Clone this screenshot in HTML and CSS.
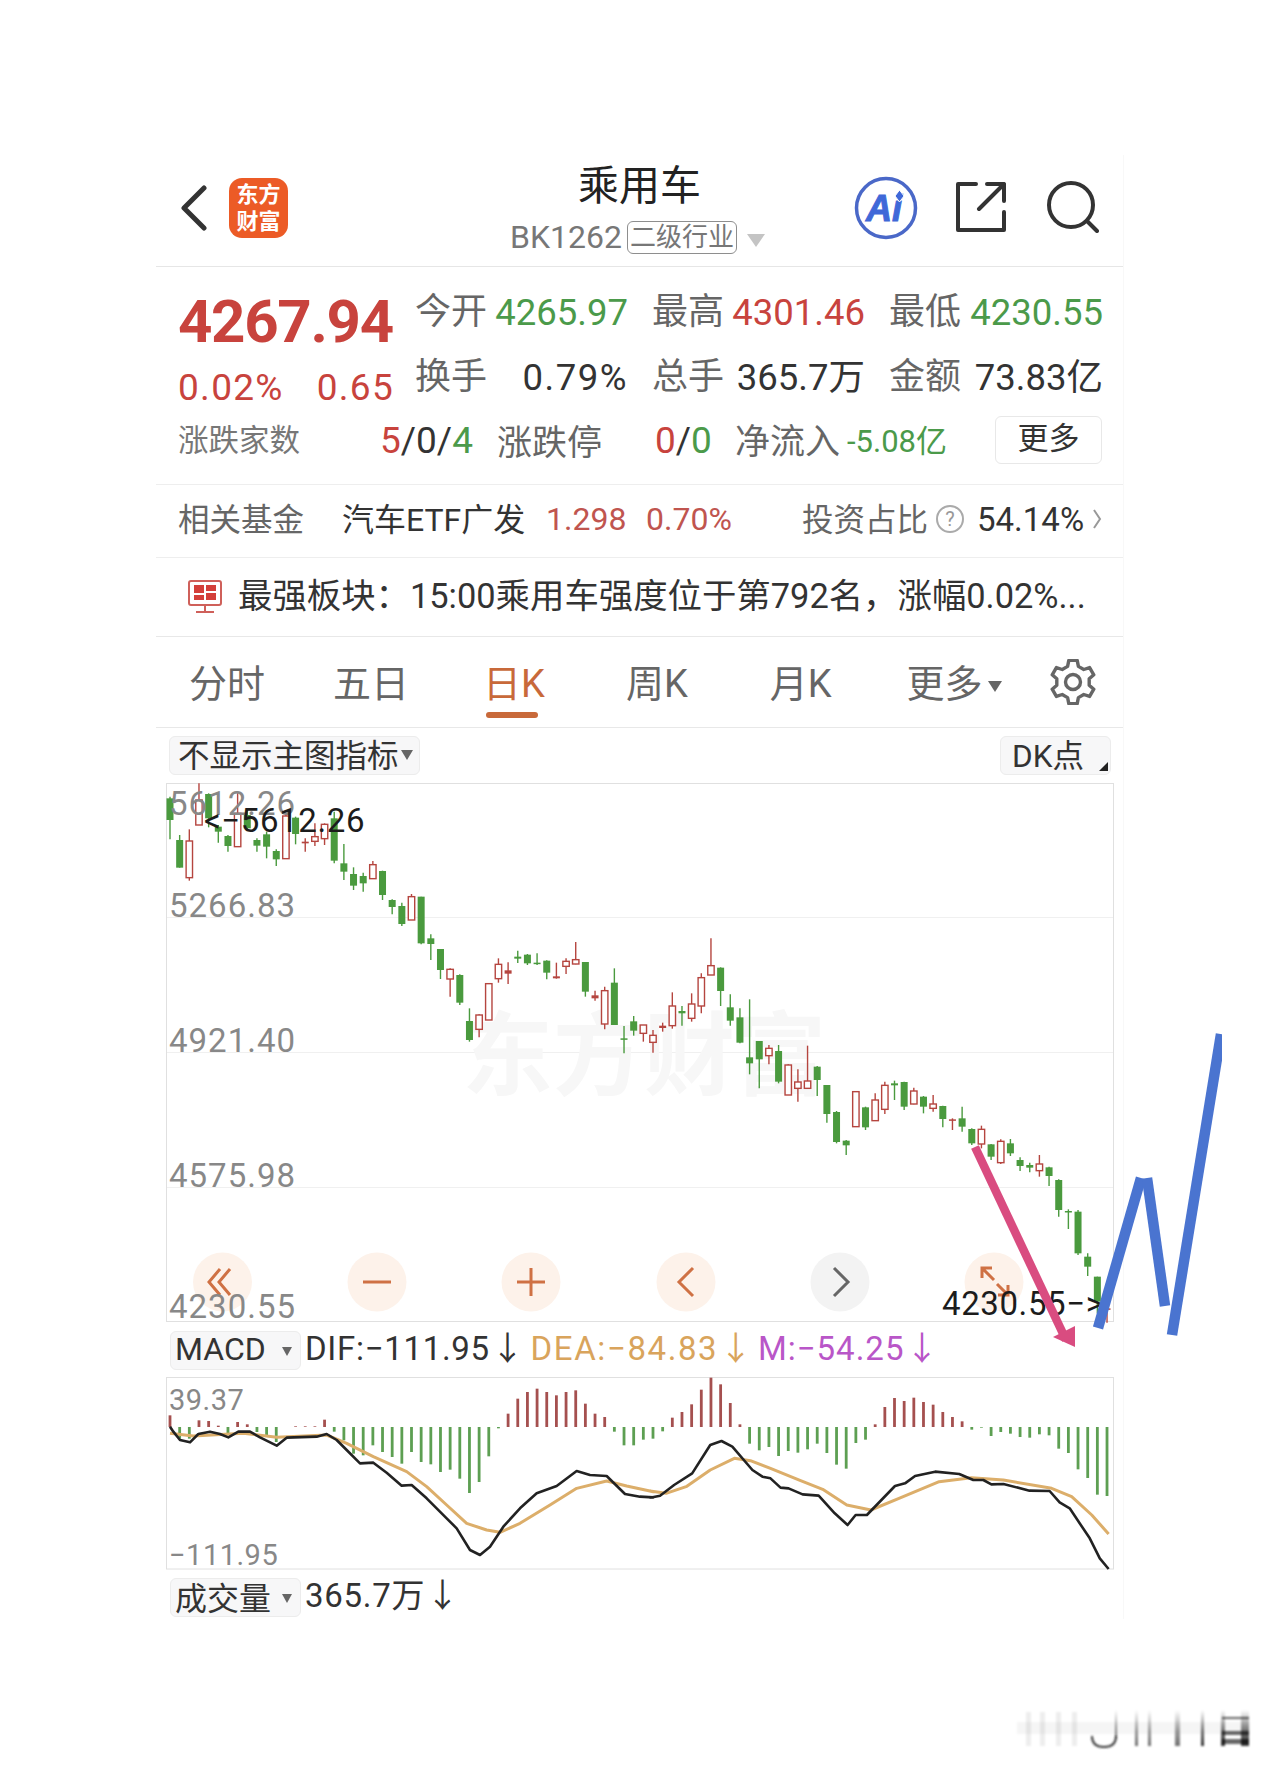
FILE: index.html
```html
<!DOCTYPE html>
<html lang="zh-CN">
<head>
  <meta charset="UTF-8">
  <title>乘用车 BK1262</title>
  <link rel="stylesheet" href="styles.css">
</head>
<body>

  <div class="panel">

    <div class="header">
      <div class="header-left">
        <svg class="back-icon" viewBox="0 0 27 46"><path d="M24 3 L4 23 L24 43"/></svg>
        <div class="logo">东方<br>财富</div>
      </div>
      <div class="header-title">
        <div class="title">乘用车</div>
        <div class="subtitle">
          <span>BK1262</span>
          <span class="badge">二级行业</span>
          <span class="badge-arrow"></span>
        </div>
      </div>
      <div class="header-right">
        <svg class="ai-icon" viewBox="0 0 64 64">
          <circle cx="32" cy="32" r="29.5"/>
          <text x="12" y="45">Ai</text>
          <path class="spark" d="M45.5 14 L50 20 L45.5 26 L41 20 Z"/>
        </svg>
        <svg class="line-icon share-icon" viewBox="0 0 50 50"><path d="M20 2 H2 V48 H48 V30 M31 2 H48 V19 M48 2 L23 27"/></svg>
        <svg class="line-icon search-icon" viewBox="0 0 52 52"><circle cx="24" cy="24" r="22"/><path d="M40 40 L50 50"/></svg>
      </div>
    </div>

    <div class="quote">
      <div class="quote-top">
        <div class="price-block">
          <div class="price up">4267.94</div>
          <div class="change up"><span>0.02%</span><span>0.65</span></div>
        </div>
        <div class="stats">
          <div class="stat"><span class="stat-label">今开</span><span class="down">4265.97</span></div>
          <div class="stat"><span class="stat-label">最高</span><span class="up">4301.46</span></div>
          <div class="stat"><span class="stat-label">最低</span><span class="down">4230.55</span></div>
          <div class="stat"><span class="stat-label">换手</span><span class="wide">0.79%</span></div>
          <div class="stat"><span class="stat-label">总手</span><span>365.7万</span></div>
          <div class="stat"><span class="stat-label">金额</span><span>73.83亿</span></div>
        </div>
      </div>
      <div class="market-row">
        <span class="breadth-label">涨跌家数</span>
        <span class="breadth"><span class="up">5</span>/0/<span class="down">4</span></span>
        <span class="limit-label">涨跌停</span>
        <span class="limit"><span class="up">0</span>/<span class="down">0</span></span>
        <span class="flow-label">净流入</span>
        <span class="flow down">-5.08亿</span>
        <span class="more-button">更多</span>
      </div>
    </div>

    <div class="fund-row">
      <span class="fund-label">相关基金</span>
      <span class="fund-name">汽车ETF广发</span>
      <span class="fund-price up-soft">1.298</span>
      <span class="fund-pct up-soft">0.70%</span>
      <span class="fund-share-label">投资占比</span>
      <span class="help-dot">?</span>
      <span class="fund-share">54.14%</span>
      <svg class="chevron" viewBox="0 0 10 24"><path d="M2 3 L8 12 L2 21"/></svg>
    </div>

    <div class="news-row">
      <svg class="monitor-icon" viewBox="0 0 34 34">
        <rect class="monitor-frame" x="1" y="1" width="32" height="24" rx="2"/>
        <path class="monitor-stand" d="M17 25 V32 M8 32 H26"/>
        <rect class="monitor-cell" x="6" y="5" width="10" height="8"/>
        <rect class="monitor-cell" x="18" y="5" width="10" height="6"/>
        <rect class="monitor-cell" x="6" y="15" width="10" height="5"/>
        <rect class="monitor-cell" x="18" y="13" width="10" height="7"/>
      </svg>
      <span class="news-text">最强板块：15:00乘用车强度位于第792名，涨幅0.02%...</span>
    </div>

    <div class="tabs">
      <span class="tab">分时</span>
      <span class="tab">五日</span>
      <span class="tab active">日K</span>
      <span class="tab">周K</span>
      <span class="tab">月K</span>
      <span class="tab">更多<i class="caret tab-caret"></i></span>
      <svg class="gear-icon" viewBox="0 0 46 46">
        <path d="M18.8 1.4 L27.2 1.4 L28.4 7.4 L33.8 10.5 L39.6 8.6 L43.8 15.8 L39.2 19.8 L39.2 26.2 L43.8 30.2 L39.6 37.4 L33.8 35.5 L28.4 38.6 L27.2 44.6 L18.8 44.6 L17.6 38.6 L12.2 35.5 L6.4 37.4 L2.2 30.2 L6.8 26.2 L6.8 19.8 L2.2 15.8 L6.4 8.6 L12.2 10.5 L17.6 7.4 Z"/>
        <circle cx="23" cy="23" r="7.5"/>
      </svg>
    </div>

    <div class="indicator-row">
      <span class="select-box main-select"><span class="select-text">不显示主图指标</span><i class="caret"></i></span>
      <span class="select-box dk-box"><span class="select-text">DK点</span><i class="corner"></i></span>
    </div>

    <svg class="kline" viewBox="166 783 948 539">
      <rect class="frame" x="166.5" y="783.5" width="947" height="538"/>
      <path class="grid-line" d="M167 917.5 H1113 M167 1052.5 H1113 M167 1187.5 H1113"/>
      <text class="watermark" x="462" y="1088">东方财富</text>
      <g id="candles"></g>
      <text class="axis-label" x="169" y="815">5612.26</text>
      <text class="axis-label" x="169" y="917">5266.83</text>
      <text class="axis-label" x="169" y="1052">4921.40</text>
      <text class="axis-label" x="169" y="1187">4575.98</text>

      <circle class="round-btn" cx="222.5" cy="1282" r="29.5"/>
      <circle class="round-btn" cx="377" cy="1282" r="29.5"/>
      <circle class="round-btn" cx="531" cy="1282" r="29.5"/>
      <circle class="round-btn" cx="686" cy="1282" r="29.5"/>
      <circle class="round-btn grey" cx="840" cy="1282" r="29.5"/>
      <circle class="round-btn" cx="994" cy="1282" r="29.5"/>
      <path class="btn-stroke" d="M220 1269 L209 1282 L220 1295 M230 1269 L219 1282 L230 1295"/>
      <path class="btn-stroke" d="M363 1282 H391"/>
      <path class="btn-stroke" d="M517 1282 H545 M531 1268 V1296"/>
      <path class="btn-stroke" d="M693 1268 L679 1282 L693 1296"/>
      <path class="btn-stroke dark" d="M834 1268 L848 1282 L834 1296"/>
      <path class="btn-stroke" d="M982 1278 V1268 H992 M982 1268 L994 1280 M997 1284 L1008 1295 M998 1295 H1008 V1285"/>

      <text class="axis-label" x="169" y="1318">4230.55</text>
      <text class="mark-label" x="204" y="832">&lt;−5612.26</text>
      <text class="mark-label" x="942" y="1315">4230.55−&gt;</text>
    </svg>

    <div class="indicator-head macd-head">
      <span class="select-box small-select">MACD<i class="caret"></i></span>
      <span class="reading">DIF:−111.95<i class="arrow">↓</i></span>
      <span class="reading dea">DEA:−84.83<i class="arrow">↓</i></span>
      <span class="reading macd">M:−54.25<i class="arrow">↓</i></span>
    </div>

    <svg class="macd-chart" viewBox="166 1377 948 193">
      <rect class="frame" x="166.5" y="1377.5" width="947" height="191.5"/>
      <g id="macdBars"></g>
      <polyline id="deaLine" class="dea-line"/>
      <polyline id="difLine" class="dif-line"/>
      <text class="macd-label" x="169" y="1410">39.37</text>
      <text class="macd-label" x="169" y="1565">−111.95</text>
    </svg>

    <div class="indicator-head volume-head">
      <span class="select-box small-select">成交量<i class="caret"></i></span>
      <span class="reading">365.7万<i class="arrow">↓</i></span>
    </div>
  </div>

  <!-- pen marks and the site stamp lie over the screenshot -->
  <svg class="overlay" viewBox="0 0 1280 1774">
    <defs>
      <filter id="soft"><feGaussianBlur stdDeviation="1.2"/></filter>
      <linearGradient id="fade" x1="0" y1="0" x2="0" y2="1">
        <stop offset="0" stop-color="#000" stop-opacity="0"/>
        <stop offset="0.6" stop-color="#000" stop-opacity="0.55"/>
        <stop offset="1" stop-color="#000" stop-opacity="0.8"/>
      </linearGradient>
      <clipPath id="penClip"><rect x="0" y="0" width="1222" height="1774"/></clipPath>
    </defs>
    <path class="pen-pink" d="M975 1147 L1066 1340"/>
    <path class="pen-pink-head" d="M1053 1337 L1075 1326 L1075 1347 Z"/>
    <g clip-path="url(#penClip)">
      <path class="pen-blue" d="M1098 1328 L1141 1178"/>
      <path class="pen-blue" d="M1147 1178 L1165 1306"/>
      <path class="pen-blue" d="M1172 1335 L1221 1034"/>
    </g>
    <g class="stamp" filter="url(#soft)">
      <rect class="stamp-band" x="1017" y="1722" width="233" height="12"/>
      <rect class="stamp-faint" x="1026" y="1712" width="5" height="34"/>
      <rect class="stamp-faint" x="1040" y="1712" width="5" height="34"/>
      <rect class="stamp-faint" x="1056" y="1712" width="5" height="34"/>
      <rect class="stamp-faint" x="1072" y="1712" width="5" height="34"/>
      <path class="stamp-u" d="M1092 1736 Q1092 1747 1104 1747 Q1116 1747 1116 1736"/>
      <rect class="stamp-mid" x="1115" y="1710" width="2" height="28"/>
      <rect class="stamp-mid" x="1135" y="1710" width="3" height="36"/>
      <rect class="stamp-mid" x="1148" y="1710" width="3" height="36"/>
      <rect class="stamp-mid" x="1175" y="1710" width="5" height="36"/>
      <rect class="stamp-dark" x="1201" y="1710" width="3" height="36"/>
      <rect class="stamp-dark" x="1221" y="1710" width="4" height="36"/>
      <rect class="stamp-dark" x="1241" y="1710" width="8" height="36"/>
      <rect class="stamp-line" x="1222" y="1717" width="27" height="2"/>
      <rect class="stamp-line" x="1222" y="1731" width="27" height="4"/>
      <rect class="stamp-line" x="1222" y="1739" width="27" height="5"/>
    </g>
  </svg>

  <script src="chart.js"></script>

</body>
</html>
```

FILE: styles.css
```css
* {
  box-sizing: border-box;
}

html, body {
  margin: 0;
  background-color: white;
}

body {
  position: relative;
  height: 1774px;
  overflow: hidden;
  padding: 155px 0 0 156px;
  font-family: Roboto, "Noto Sans CJK SC", sans-serif;
  color: #333;
}

.panel {
  width: 968px;
  border-right: 1px solid #f8f8f8;
}

.up { color: #c8433d; }
.down { color: #4b9a4a; }
.up-soft { color: #c0554f; }

/* header */
.header {
  height: 112px;
  display: grid;
  grid-template-columns: 1fr auto 1fr;
  border-bottom: 1px solid #e6e6e6;
}

.header-left {
  display: flex;
  align-items: flex-start;
  padding: 29px 0 0 24px;
  gap: 22px;
}

.back-icon {
  width: 27px;
  height: 46px;
  margin-top: 1px;
  fill: none;
  stroke: #333;
  stroke-width: 5;
  stroke-linecap: round;
  stroke-linejoin: round;
}

.logo {
  width: 59px;
  height: 60px;
  margin-top: -6px;
  padding-top: 3px;
  background-color: #ec5b26;
  border-radius: 13px;
  color: white;
  font-size: 22px;
  font-weight: 700;
  line-height: 27px;
  text-align: center;
}

.header-title {
  text-align: center;
  padding-top: 8px;
}

.title {
  font-size: 41px;
  line-height: 46px;
  color: #222;
}

.subtitle {
  display: flex;
  align-items: center;
  margin: 11px 0 0 -4px;
  color: #777;
  font-size: 32px;
  line-height: 34px;
}

.badge {
  margin-left: 5px;
  padding: 0 2px;
  border: 1px solid #8e8e8e;
  border-radius: 6px;
  font-size: 26px;
  line-height: 31px;
  letter-spacing: 0;
}

.badge-arrow {
  margin-left: 10px;
  margin-top: 6px;
  border-top: 13px solid #c4c4c4;
  border-left: 9px solid transparent;
  border-right: 9px solid transparent;
}

.header-right {
  display: flex;
  justify-content: flex-end;
  align-items: flex-start;
  padding: 21px 24px 0 0;
}

.ai-icon {
  width: 64px;
  height: 64px;
  margin: 0 38px 0 0;
}

.ai-icon circle {
  fill: none;
  stroke: #4a68c8;
  stroke-width: 3.5;
}

.ai-icon text {
  font-family: "Liberation Sans", sans-serif;
  font-size: 36px;
  font-weight: 700;
  font-style: italic;
  fill: #3f68d8;
  stroke: #3f68d8;
  stroke-width: 1;
}

.ai-icon .spark {
  fill: #3f68d8;
  stroke: white;
  stroke-width: 1;
}

.line-icon {
  fill: none;
  stroke: #333;
  stroke-width: 4;
  stroke-linecap: round;
  stroke-linejoin: round;
}

.share-icon {
  width: 50px;
  height: 50px;
  margin: 6px 41px 0 0;
}

.search-icon {
  width: 52px;
  height: 52px;
  margin-top: 5px;
}

/* quote */
.quote {
  height: 218px;
  padding: 13px 20px 0 22px;
  border-bottom: 1px solid #eee;
}

.quote-top {
  display: flex;
  height: 129px;
}

.price-block {
  width: 237px;
}

.price {
  margin-top: 12px;
  font-size: 60px;
  font-weight: 700;
  line-height: 60px;
  letter-spacing: -1.3px;
}

.change {
  display: flex;
  justify-content: space-between;
  width: 216px;
  margin-top: 16px;
  font-size: 37px;
  line-height: 40px;
  letter-spacing: 1.3px;
}

.stats {
  display: grid;
  grid-template-columns: 213px 213px 214px;
  grid-auto-rows: 65px;
  column-gap: 24px;
  font-size: 36.5px;
  line-height: 65px;
}

.stat {
  display: flex;
  justify-content: space-between;
}

.stat-label {
  color: #666;
  font-size: 36px;
}

.wide {
  letter-spacing: 1.5px;
}

.market-row {
  display: flex;
  align-items: center;
  height: 58px;
  margin-top: 2px;
  font-size: 35px;
  color: #666;
}

.breadth-label { width: 202px; margin-bottom: 4px; font-size: 30.5px; color: #777; }
.breadth { width: 117px; font-size: 37px; color: #333; }
.limit-label { width: 158px; margin-bottom: 2px; }
.limit { width: 80px; font-size: 37px; color: #333; }
.flow-label { width: 112px; margin-bottom: 3px; }
.flow { width: 148px; margin-bottom: 3px; font-size: 31px; }

.more-button {
  width: 107px;
  height: 48px;
  border: 1px solid #e8e8e8;
  border-radius: 6px;
  color: #333;
  font-size: 31px;
  line-height: 44px;
  text-align: center;
}

/* fund + news rows */
.fund-row {
  display: flex;
  align-items: center;
  height: 73px;
  padding: 0 0 4px 22px;
  font-size: 32px;
  border-bottom: 1px solid #eee;
}

.fund-label { width: 164px; margin-bottom: 5px; color: #666; font-size: 31.5px; }
.fund-name { width: 204px; margin-bottom: 5px; }
.fund-price { width: 100px; }
.fund-pct { width: 156px; }
.fund-share-label { width: 134px; margin-bottom: 5px; color: #666; font-size: 31.5px; }

.help-dot {
  width: 28px;
  height: 28px;
  margin-right: 13px;
  border: 2px solid #aaa;
  border-radius: 50%;
  color: #999;
  font-size: 20px;
  line-height: 24px;
  text-align: center;
}

.fund-share {
  font-size: 33px;
}

.chevron {
  width: 10px;
  height: 24px;
  margin-left: 8px;
  fill: none;
  stroke: #999;
  stroke-width: 2;
}

.news-row {
  display: flex;
  align-items: center;
  height: 79px;
  padding-left: 32px;
  gap: 16px;
  font-size: 34.4px;
  border-bottom: 1px solid #e8e8e8;
  white-space: nowrap;
}

.news-text {
  margin-bottom: 8px;
}

.monitor-icon {
  width: 34px;
  height: 34px;
  flex: none;
}

.monitor-frame, .monitor-stand {
  fill: none;
  stroke: #cf605a;
  stroke-width: 2;
}

.monitor-cell {
  fill: #d33f3a;
}

/* period tabs */
.tabs {
  display: flex;
  align-items: center;
  height: 91px;
  padding-left: 33px;
  font-size: 38px;
  color: #666;
  border-bottom: 1px solid #e8e8e8;
}

.tab {
  position: relative;
  margin-right: 81px;
  margin-bottom: 4px;
  white-space: nowrap;
}

.tab:nth-child(1) { margin-right: 68px; }
.tab:nth-child(2) { margin-right: 74px; }
.tab:nth-child(4) { margin-right: 82px; }
.tab:nth-child(5) { margin-right: 75px; }
.tab:nth-child(6) { margin-right: 48px; }

.tab.active {
  color: #c8693a;
}

.tab.active::after {
  content: "";
  position: absolute;
  left: 3px;
  top: 59px;
  width: 52px;
  height: 6px;
  border-radius: 3px;
  background-color: #c8693a;
}

.caret {
  display: inline-block;
  margin-left: 5px;
  vertical-align: middle;
  border-top: 9px solid #666;
  border-left: 5px solid transparent;
  border-right: 5px solid transparent;
}

.tab-caret {
  border-top-width: 11px;
  border-left-width: 7px;
  border-right-width: 7px;
}

.gear-icon {
  width: 46px;
  height: 46px;
  fill: none;
  stroke: #666;
  stroke-width: 3.4;
  stroke-linejoin: round;
}

/* selector rows */
.select-box {
  display: inline-flex;
  align-items: center;
  position: relative;
  height: 39px;
  background-color: #f7f7f8;
  border: 1px solid #ececec;
  border-radius: 6px;
  color: #333;
  font-size: 31.5px;
  white-space: nowrap;
}

.select-text {
  margin-bottom: 6px;
}

.indicator-row {
  display: flex;
  justify-content: space-between;
  height: 55px;
  padding: 8px 12px 0 13px;
}

.main-select {
  width: 251px;
  padding-left: 8px;
}

.main-select .caret {
  margin-left: 2px;
  margin-top: -2px;
  border-top-width: 10px;
  border-left-width: 6px;
  border-right-width: 6px;
}

.dk-box {
  width: 111px;
  padding-left: 11px;
}

.corner {
  position: absolute;
  right: 2px;
  bottom: 3px;
  border-bottom: 9px solid #222;
  border-left: 9px solid transparent;
}

.kline, .macd-chart {
  display: block;
  margin-left: 10px;
  width: 948px;
  overflow: visible;
}

.kline { height: 539px; }
.macd-chart { height: 193px; }

.frame {
  fill: none;
  stroke: #e0e0e0;
  stroke-width: 1;
}

.grid-line {
  stroke: #f0f0f0;
  stroke-width: 1;
}

.watermark {
  font-size: 91px;
  font-weight: 700;
  fill: #f7f7f7;
}

.axis-label {
  font-size: 33px;
  letter-spacing: 1px;
  fill: #888;
}

.mark-label {
  font-size: 33px;
  letter-spacing: 0.6px;
  fill: #1c1c1c;
}

.round-btn { fill: #fdf2ea; }
.round-btn.grey { fill: #f3f3f3; }

.btn-stroke {
  fill: none;
  stroke: #cf7144;
  stroke-width: 3;
}

.btn-stroke.dark { stroke: #666; }

.indicator-head {
  display: flex;
  align-items: flex-start;
  padding-left: 14px;
  font-size: 33px;
}

.macd-head { height: 55px; padding-top: 9px; }
.volume-head { height: 49px; padding-top: 8px; }

.small-select {
  width: 131px;
  padding: 0 0 3px 4px;
  margin-right: 4px;
  font-size: 32px;
}

.small-select .caret {
  position: absolute;
  right: 8px;
  top: 15px;
}

.reading {
  height: 40px;
  margin-top: 1px;
  line-height: 34px;
  letter-spacing: 0.7px;
  white-space: nowrap;
}

.arrow {
  font-style: normal;
  margin-left: 1px;
}

.dea {
  margin-left: 6px;
  color: #d9a45c;
  letter-spacing: 1.6px;
}

.macd {
  margin-left: 4px;
  color: #b956c8;
  letter-spacing: 1px;
}

.macd-label {
  font-size: 29px;
  letter-spacing: 0.5px;
  fill: #888;
}

.dif-line, .dea-line {
  fill: none;
  stroke-width: 2.6;
  stroke-linejoin: round;
}

.dif-line { stroke: #222; }
.dea-line { stroke: #dcae6a; stroke-width: 3; }

/* hand drawn marks */
.overlay {
  position: absolute;
  left: 0;
  top: 0;
  width: 1280px;
  height: 1774px;
  pointer-events: none;
}

.pen-pink {
  fill: none;
  stroke: #d94c80;
  stroke-width: 8.5;
}

.pen-pink-head { fill: #d94c80; }

.pen-blue {
  fill: none;
  stroke: #4a74d0;
  stroke-width: 10.5;
}

.stamp-band { fill: #000; opacity: 0.04; }
.stamp-faint { fill: #000; opacity: 0.07; }
.stamp-mid { fill: url(#fade); opacity: 0.7; }
.stamp-dark { fill: url(#fade); }
.stamp-line { fill: #000; opacity: 0.6; }

.stamp-u {
  fill: none;
  stroke: #333;
  stroke-width: 2;
}
```

FILE: chart.js
```js
const NS = "http://www.w3.org/2000/svg";
const GREEN = "#4a9a3e";
const RED = "#b5453f";

function el(parent, name, attrs) {
  const node = document.createElementNS(NS, name);
  for (const key in attrs) node.setAttribute(key, attrs[key]);
  parent.appendChild(node);
  return node;
}

function slotX(i) {
  return 170 + i * 9.66;
}

// [colour, wick top, body top, body bottom, wick bottom], y read at 3x from a crop
const upperCandles = [
  ["g", 50, 55, 120, 178], ["g", 165, 180, 263, 263], ["r", 148, 183, 293, 302], ["r", 10, 60, 135, 135],
  ["g", 40, 42, 115, 142], ["g", 135, 140, 155, 188], ["g", 165, 168, 198, 215], ["r", 35, 100, 200, 200],
  ["g", 90, 105, 145, 150], ["g", 175, 180, 197, 215], ["g", 155, 163, 200, 235], ["g", 208, 213, 238, 258],
  ["r", 100, 108, 236, 237], ["g", 110, 113, 162, 193], ["r", 175, 185, 190, 215], ["r", 130, 170, 184, 198],
  ["r", 130, 133, 176, 195], ["g", 95, 115, 242, 250], ["g", 192, 250, 275, 300], ["g", 262, 282, 317, 330],
  ["g", 278, 288, 310, 335], ["r", 243, 254, 296, 297], ["g", 272, 273, 345, 360], ["g", 358, 360, 381, 403],
  ["g", 368, 378, 432, 438], ["r", 342, 350, 420, 420], ["g", 350, 350, 490, 493], ["g", 463, 475, 492, 540],
  ["g", 507, 507, 570, 597], ["r", 565, 568, 597, 650], ["g", 583, 585, 668, 675], ["g", 685, 723, 780, 785],
  ["r", 703, 705, 748, 772], ["r", 610, 611, 720, 720], ["r", 535, 553, 596, 608], ["r", 547, 571, 581, 612],
  ["g", 512, 530, 536, 549], ["g", 522, 524, 550, 555], ["g", 520, 548, 552, 555], ["g", 541, 542, 578, 598],
  ["r", 548, 589, 595, 596], ["r", 535, 544, 559, 582], ["r", 486, 539, 552, 553], ["g", 546, 546, 635, 650],
  ["r", 632, 646, 655, 662], ["r", 620, 632, 732, 748], ["g", 565, 608, 735, 735], ["g", 738, 775, 778, 820],
  ["g", 708, 724, 752, 767], ["r", 735, 735, 760, 785]
];

const lowerCandles = [
  ["r", 300, 316, 337, 368], ["r", 278, 287, 294, 305], ["r", 187, 228, 287, 296], ["g", 228, 243, 250, 287],
  ["r", 190, 222, 265, 275], ["r", 130, 143, 228, 250], ["r", 25, 107, 135, 135], ["g", 112, 113, 183, 228],
  ["g", 193, 232, 272, 287], ["g", 235, 262, 338, 340], ["g", 208, 382, 400, 433], ["g", 333, 333, 388, 475],
  ["r", 345, 355, 377, 403], ["g", 345, 363, 455, 460], ["r", 403, 405, 495, 495], ["r", 418, 456, 475, 515],
  ["r", 347, 453, 475, 476], ["g", 408, 410, 450, 498], ["g", 465, 465, 552, 578], ["g", 543, 546, 636, 640],
  ["g", 630, 632, 646, 675], ["r", 485, 485, 590, 590], ["g", 530, 532, 592, 600], ["r", 490, 510, 572, 572],
  ["r", 455, 466, 538, 552], ["g", 452, 460, 466, 510], ["g", 455, 456, 530, 540], ["r", 473, 483, 522, 523],
  ["g", 498, 500, 530, 550], ["r", 495, 522, 535, 545], ["g", 527, 528, 567, 592], ["r", 565, 568, 571, 600],
  ["g", 530, 565, 590, 605], ["g", 595, 597, 640, 645], ["r", 587, 598, 642, 655], ["g", 642, 643, 680, 690],
  ["r", 628, 634, 698, 702], ["g", 627, 640, 670, 678], ["g", 682, 690, 708, 723], ["g", 698, 705, 713, 727],
  ["r", 675, 702, 722, 740], ["g", 710, 712, 738, 768], ["g", 748, 750, 840, 860], ["g", 838, 843, 846, 897],
  ["g", 840, 845, 970, 975], ["g", 970, 980, 1010, 1038], ["g", 1040, 1040, 1115, 1150], ["r", 1135, 1135, 1137, 1178]
];

function drawCandle(group, i, c, baseY) {
  const x = slotX(i);
  const y = (v) => baseY + v / 3;
  const colour = c[0] === "g" ? GREEN : RED;
  const height = y(c[3]) - y(c[2]);
  el(group, "line", { x1: x, x2: x, y1: y(c[1]), y2: y(c[4]), stroke: colour, "stroke-width": 1.4 });
  if (c[0] === "g" || height < 3.5) {
    el(group, "rect", { x: x - 3.5, y: y(c[2]), width: 7, height: Math.max(height, 1.5), fill: colour });
  } else {
    el(group, "rect", {
      x: x - 3.2, y: y(c[2]), width: 6.4, height: height,
      fill: "white", stroke: colour, "stroke-width": 1.4
    });
  }
}

const candles = document.getElementById("candles");
upperCandles.forEach((c, i) => drawCandle(candles, i, c, 780));
lowerCandles.forEach((c, i) => drawCandle(candles, i + upperCandles.length, c, 930));

// MACD bars: + goes up (red), - goes down (green)
const macd = [
  35, -35, -35, 20, 18, 4, -18, 15, 8, -15, -30, -45, 0, 2, 2, 2,
  22, -14, -40, -80, -85, -55, -75, -90, -110, -75, -105, -112, -135, -128, -155, -198,
  -165, -88, -4, 40, 85, 105, 115, 105, 95, 105, 110, 70, 40, 30, -14, -55,
  -55, -38, -35, -13, 28, 45, 68, 112, 148, 128, 72, 8, -50, -70,
  -60, -87, -72, -77, -67, -50, -78, -113, -125, -48, -38, 8, 60, 87, 78, 88,
  75, 67, 45, 30, 17, -8, -2, -27, -15, -20, -30, -32, -22, -25, -65, -78,
  -127, -153, -203, -207
];

const bars = document.getElementById("macdBars");
macd.forEach((v, i) => {
  if (v === 0) return;
  const h = Math.abs(v) / 3;
  el(bars, "rect", {
    x: slotX(i) - 1.4, y: v > 0 ? 1427 - h : 1427, width: 2.8, height: h,
    fill: v > 0 ? "#a5504f" : "#5d9f52"
  });
});

function toPoints(left, right) {
  const a = left.map((p) => (160 + p[0] / 3) + "," + (1180 + p[1] / 3));
  const b = right.map((p) => (650 + p[0] / 2.49) + "," + (1330 + p[1] / 3));
  return a.concat(b).join(" ");
}

document.getElementById("difLine").setAttribute("points", toPoints(
  [[30, 740], [40, 755], [60, 780], [90, 787], [115, 762], [150, 755], [180, 762], [205, 772], [235, 755],
   [270, 755], [300, 772], [350, 797], [380, 773], [470, 770], [500, 762], [530, 780], [560, 810], [600, 850],
   [640, 848], [680, 878], [725, 917], [755, 915], [800, 955], [860, 1015], [890, 1045], [930, 1110], [960, 1125],
   [990, 1100], [1030, 1040], [1080, 985], [1130, 940], [1190, 918], [1250, 873], [1290, 885], [1340, 888],
   [1395, 942], [1440, 950], [1480, 952]],
  [[0, 503], [25, 497], [60, 465], [105, 430], [150, 345], [178, 333], [205, 350], [255, 420], [280, 440], [300, 445],
   [325, 473], [345, 475], [380, 493], [420, 497], [460, 550], [492, 585], [512, 555], [540, 555], [610, 468],
   [635, 460], [660, 438], [710, 425], [770, 432], [805, 450], [830, 450], [850, 463], [880, 462], [945, 482],
   [995, 483], [1020, 517], [1045, 535], [1095, 625], [1120, 685], [1142, 717]]
));

document.getElementById("deaLine").setAttribute("points", toPoints(
  [[30, 760], [100, 768], [250, 760], [350, 772], [500, 765], [560, 790], [640, 830], [740, 875], [800, 920],
   [860, 975], [920, 1030], [980, 1050], [1020, 1057], [1080, 1030], [1170, 975], [1250, 925], [1340, 903],
   [1400, 918], [1480, 935]],
  [[0, 483], [40, 490], [90, 470], [150, 420], [210, 385], [250, 392], [300, 415], [375, 452], [430, 478],
   [490, 525], [550, 540], [620, 505], [720, 455], [800, 443], [880, 450], [1000, 475], [1050, 500], [1100, 555],
   [1142, 612]]
));
```
